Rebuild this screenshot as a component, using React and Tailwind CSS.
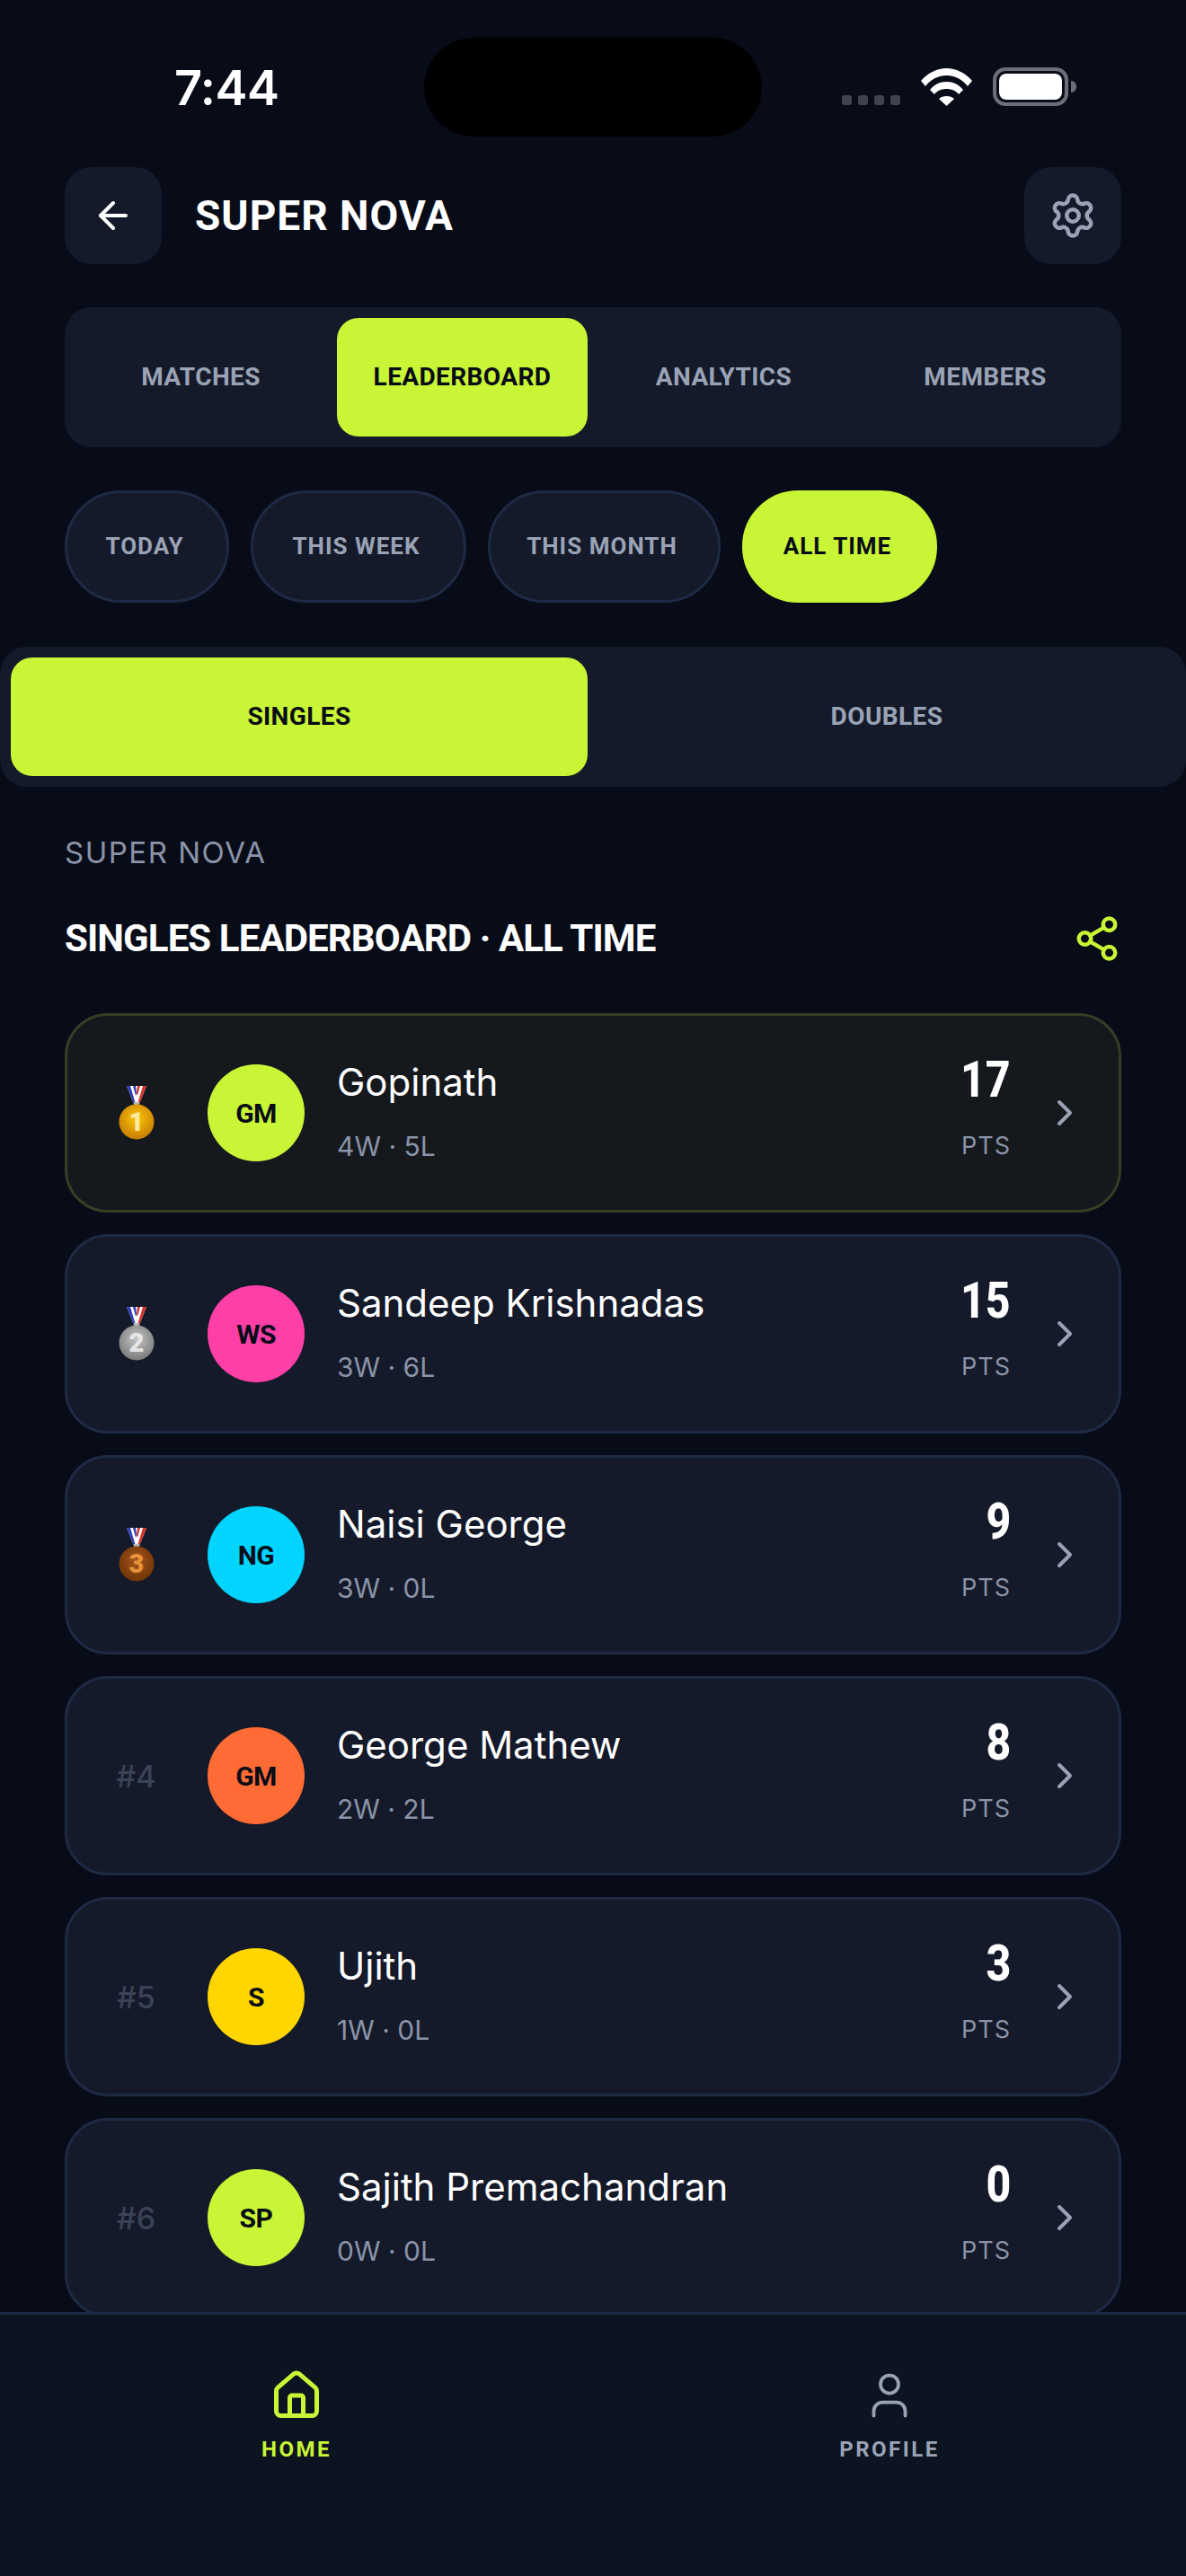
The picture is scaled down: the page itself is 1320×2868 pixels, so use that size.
import { ArrowLeft, ChevronRight, House, Settings, Share2, User } from "lucide-react";

const tabs = ["MATCHES", "LEADERBOARD", "ANALYTICS", "MEMBERS"];

const ranges = [
  { label: "TODAY", width: "w-[183px]" },
  { label: "THIS WEEK", width: "w-[240px]" },
  { label: "THIS MONTH", width: "w-[259px]" },
  { label: "ALL TIME", width: "w-[217px]", active: true },
];

const players = [
  { rank: 1, initials: "GM", color: "bg-[#c8f535]", name: "Gopinath", record: "4W · 5L", points: 17 },
  { rank: 2, initials: "WS", color: "bg-[#ff3fa8]", name: "Sandeep Krishnadas", record: "3W · 6L", points: 15 },
  { rank: 3, initials: "NG", color: "bg-[#00d4ff]", name: "Naisi George", record: "3W · 0L", points: 9 },
  { rank: 4, initials: "GM", color: "bg-[#ff6b35]", name: "George Mathew", record: "2W · 2L", points: 8 },
  { rank: 5, initials: "S", color: "bg-[#ffd600]", name: "Ujith", record: "1W · 0L", points: 3 },
  { rank: 6, initials: "SP", color: "bg-[#c8f535]", name: "Sajith Premachandran", record: "0W · 0L", points: 0 },
];

const medalColors = {
  1: { light: "#fdc70c", dark: "#c77c02", digit: "#ffe9a0" },
  2: { light: "#c4c4c4", dark: "#7c7c7c", digit: "#e6e6e6" },
  3: { light: "#a5561c", dark: "#6f3405", digit: "#e8923a" },
};

const Medal = ({ rank }) => {
  const c = medalColors[rank];
  return (
    <svg width="42" height="60" viewBox="0 0 42 60">
      <defs>
        <radialGradient id={`medal-${rank}`} cx="50%" cy="40%" r="60%">
          <stop offset="0%" stopColor={c.light} />
          <stop offset="100%" stopColor={c.dark} />
        </radialGradient>
      </defs>
      <path d="M10 0h22l-8 20h-6z" fill="#fff" />
      <path d="M10 0h4l6 20h-2z" fill="#2f3fb5" />
      <path d="M28 0h4l-8 20h-2z" fill="#d5332b" />
      <path d="M17 0h3l1 8-1 3z" fill="#2f3fb5" />
      <path d="M22 0h3l-3 11-1-3z" fill="#d5332b" />
      <rect x="18" y="18" width="6" height="4" fill="#b9b9b9" />
      <circle cx="21" cy="40" r="19.5" fill={`url(#medal-${rank})`} />
      <text x="21" y="50" textAnchor="middle" fontFamily="Roboto, sans-serif" fontWeight="900" fontSize="29" fill={c.digit}>
        {rank}
      </text>
    </svg>
  );
};

const Wifi = () => (
  <svg width="57" height="42" viewBox="0 0 57 42" fill="#fff">
    <path d="M0 14C8 5 18 0 28.5 0S49 5 57 14l-5 6C46 12 37 8 28.5 8S11 12 5 20z" />
    <path d="M10 24c5-6 11-9 18.500-9S42 18 47 24l-5 5c-3-4-8-6-13.500-6S18 25 15 29z" />
    <path d="M20 34c2-2 5-3 8.500-3s6.500 1 8.500 3l-8.500 8z" />
  </svg>
);

const Battery = () => (
  <svg width="93" height="43" viewBox="0 0 93 43">
    <rect x="2" y="2" width="80" height="39" rx="12" fill="none" stroke="#6c6f7a" strokeWidth="4" />
    <rect x="7" y="7" width="70" height="29" rx="8" fill="#fff" />
    <path d="M87 15c4 0 6 3 6 6.500s-2 6.500-6 6.500z" fill="#6c6f7a" />
  </svg>
);

const StatusBar = () => (
  <div className="flex h-[186px] items-start">
    <div className="w-[472px] pl-[194px] pt-[66px] [font-family:Inter,sans-serif] text-[54px] leading-[64px] font-semibold tracking-[-0.5px] text-white">
      7:44
    </div>
    <div className="mt-[42px] h-[110px] w-[376px] rounded-[55px] bg-black" />
    <div className="flex flex-1 items-end pl-[89px] pt-[75px]">
      <div className="flex gap-[7px] pb-[1px]">
        {[0, 1, 2, 3].map((dot) => (
          <span key={dot} className="h-[11px] w-[11px] rounded-[3px] bg-[#3f4350]" />
        ))}
      </div>
      <div className="ml-[23px]">
        <Wifi />
      </div>
      <div className="ml-[23px]">
        <Battery />
      </div>
    </div>
  </div>
);

const Header = () => (
  <div className="flex items-center justify-between px-[72px]">
    <div className="flex items-center gap-[37px]">
      <button className="flex h-[108px] w-[108px] items-center justify-center rounded-[30px] bg-[#141a2a] text-white">
        <ArrowLeft size={48} strokeWidth={2} />
      </button>
      <h1 className="[font-family:Roboto,sans-serif] text-[46px] leading-[60px] font-bold tracking-[1px] text-white">
        SUPER NOVA
      </h1>
    </div>
    <button className="flex h-[108px] w-[108px] items-center justify-center rounded-[30px] bg-[#141a2a] text-[#9aa3b5]">
      <Settings size={54} strokeWidth={2} />
    </button>
  </div>
);

const SegmentItem = ({ label, active }) => (
  <div
    className={`flex h-[132px] items-center justify-center rounded-[24px] [font-family:Roboto,sans-serif] text-[28px] font-bold tracking-[0.4px] ${
      active ? "bg-[#c8f535] text-[#080c18]" : "text-[#9aa3b5]"
    }`}
  >
    {label}
  </div>
);

const PlayerCard = ({ player }) => {
  const isFirst = player.rank === 1;
  return (
    <div
      className={`flex h-[222px] items-center rounded-[48px] border-[3px] pl-[24px] pr-[36px] ${
        isFirst ? "border-[#343f26] bg-[#15191e]" : "border-[#1e2a45] bg-[#141a2a]"
      }`}
    >
      <div className="flex w-[108px] items-center justify-center pr-[3px] [font-family:Inter,sans-serif] text-[34px] font-medium text-[#3a4356]">
        {player.rank <= 3 ? <Medal rank={player.rank} /> : `#${player.rank}`}
      </div>
      <div
        className={`ml-[24px] flex h-[108px] w-[108px] items-center justify-center rounded-full [font-family:Roboto,sans-serif] text-[30px] font-bold tracking-[-0.5px] text-[#080c18] ${player.color}`}
      >
        {player.initials}
      </div>
      <div className="ml-[36px] flex-1 pb-[6px] [font-family:Inter,sans-serif]">
        <div className="text-[42px] leading-[60px] text-white">{player.name}</div>
        <div className="mt-[20px] text-[30px] leading-[42px] text-[#8b93a7]">{player.record}</div>
      </div>
      <div className="flex flex-col items-end pb-[12px]">
        <div className="origin-right scale-x-[0.86] pb-[5px] [font-family:Roboto,sans-serif] text-[56px] leading-[62px] font-extrabold text-white">
          {player.points}
        </div>
        <div className="mt-[18px] [font-family:Inter,sans-serif] text-[27px] leading-[40px] tracking-[1px] text-[#8b93a7]">
          PTS
        </div>
      </div>
      <ChevronRight className="ml-[36px] text-[#9aa3b5]" size={48} strokeWidth={2} />
    </div>
  );
};

const BottomNav = () => (
  <div className="grid h-[294px] shrink-0 grid-cols-2 border-t-[3px] border-[#1e2a45] bg-[#0d1421] pt-[60px]">
    <div className="flex flex-col items-center text-[#c8f535]">
      <House size={60} strokeWidth={2} />
      <span className="mt-[15px] [font-family:Roboto,sans-serif] text-[24px] leading-[30px] font-bold tracking-[2.5px]">HOME</span>
    </div>
    <div className="flex flex-col items-center text-[#9aa3b5]">
      <User size={60} strokeWidth={1.5} />
      <span className="mt-[15px] [font-family:Roboto,sans-serif] text-[24px] leading-[30px] font-bold tracking-[2.5px]">PROFILE</span>
    </div>
  </div>
);

export default function App() {
  return (
    <div className="flex h-[2868px] w-[1320px] flex-col overflow-hidden bg-[#080c18]">
      <div className="min-h-0 flex-1 overflow-hidden">
        <StatusBar />
        <Header />

        <div className="mx-[72px] mt-[48px] grid grid-cols-4 gap-[12px] rounded-[30px] bg-[#141a2a] p-[12px]">
          {tabs.map((tab) => (
            <SegmentItem key={tab} label={tab} active={tab === "LEADERBOARD"} />
          ))}
        </div>

        <div className="mt-[48px] flex gap-[24px] px-[72px]">
          {ranges.map((range) => (
            <div
              key={range.label}
              className={`flex h-[125px] items-center justify-center rounded-full border-[3px] pr-[5px] [font-family:Roboto,sans-serif] text-[26px] font-bold tracking-[1px] ${range.width} ${
                range.active
                  ? "border-[#c8f535] bg-[#c8f535] text-[#080c18]"
                  : "border-[#1e2a45] bg-[#141a2a] text-[#9aa3b5]"
              }`}
            >
              {range.label}
            </div>
          ))}
        </div>

        <div className="mt-[49px] grid grid-cols-2 gap-[12px] rounded-[30px] bg-[#141a2a] p-[12px]">
          <SegmentItem label="SINGLES" active />
          <SegmentItem label="DOUBLES" />
        </div>

        <div className="mt-[50px] px-[72px]">
          <div className="[font-family:Inter,sans-serif] text-[33px] leading-[46px] tracking-[1.5px] text-[#8b93a7]">SUPER NOVA</div>
          <div className="mt-[43px] flex items-center justify-between">
            <h2 className="[font-family:Roboto,sans-serif] text-[42px] leading-[60px] font-bold tracking-[-0.9px] text-white">
              SINGLES LEADERBOARD · ALL TIME
            </h2>
            <Share2 className="text-[#c8f535]" size={54} strokeWidth={2} />
          </div>
          <div className="mt-[53px] flex flex-col gap-[24px]">
            {players.map((player) => (
              <PlayerCard key={player.rank} player={player} />
            ))}
          </div>
        </div>
      </div>
      <BottomNav />
    </div>
  );
}
